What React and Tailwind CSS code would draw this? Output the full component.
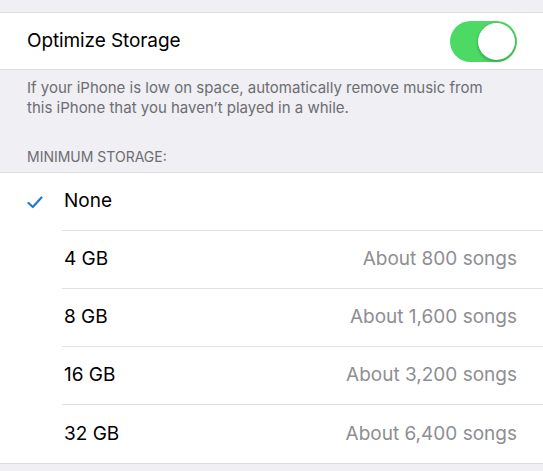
import React from 'react';

const options = [
  { label: 'None', detail: '', checked: true },
  { label: '4 GB', detail: 'About 800 songs' },
  { label: '8 GB', detail: 'About 1,600 songs' },
  { label: '16 GB', detail: 'About 3,200 songs' },
  { label: '32 GB', detail: 'About 6,400 songs' },
];

export default function App() {
  return (
    <div
      className="w-[543px] h-[471px] overflow-hidden bg-[#efeff4]"
      style={{ fontFamily: 'Inter, "Liberation Sans", sans-serif' }}
    >
      <div className="h-[12px]" />
      {/* toggle row */}
      <div className="bg-white border-y border-[#dcdce0] h-[58px] flex items-center justify-between pl-[27px] pr-[26px]">
        <span className="text-[19px] text-black tracking-[-0.1px]">Optimize Storage</span>
        <div className="w-[67px] h-[41px] rounded-full bg-[#4cd964] flex items-center justify-end p-[2px]">
          <div className="w-[37px] h-[37px] rounded-full bg-white shadow-[0_2px_3px_rgba(0,0,0,0.25)] ring-1 ring-[#3fb857]/40" />
        </div>
      </div>

      <p className="pl-[27px] pr-[50px] pt-[8px] text-[15px] leading-[20px] text-[#6d6d72]">
        If your iPhone is low on space, automatically remove music from this iPhone that you haven’t played in a while.
      </p>

      <div className="px-[27px] pt-[30px] pb-[6px] text-[14px] leading-[18px] text-[#6d6d72] uppercase">
        Minimum Storage:
      </div>

      <div className="bg-white border-y border-[#dcdce0]">
        {options.map((o, i) => (
          <div key={o.label} className="flex items-stretch h-[58px]">
            <div className="w-[62px] flex items-center pl-[27px]">
              {o.checked && (
                <svg width="16" height="13" viewBox="0 0 16 13" fill="none">
                  <path d="M1.5 7 L5.8 11 L14.5 1.5" stroke="#1a7ae0" strokeWidth="2.2" strokeLinecap="round" strokeLinejoin="round" />
                </svg>
              )}
            </div>
            <div
              className={
                'flex-1 flex items-center justify-between pr-[26px] pl-[2px] ' +
                (i < options.length - 1 ? 'border-b border-[#e0e0e5]' : '')
              }
            >
              <span className="text-[19px] text-black">{o.label}</span>
              <span className="text-[19px] text-[#8e8e93]">{o.detail}</span>
            </div>
          </div>
        ))}
      </div>
    </div>
  );
}
